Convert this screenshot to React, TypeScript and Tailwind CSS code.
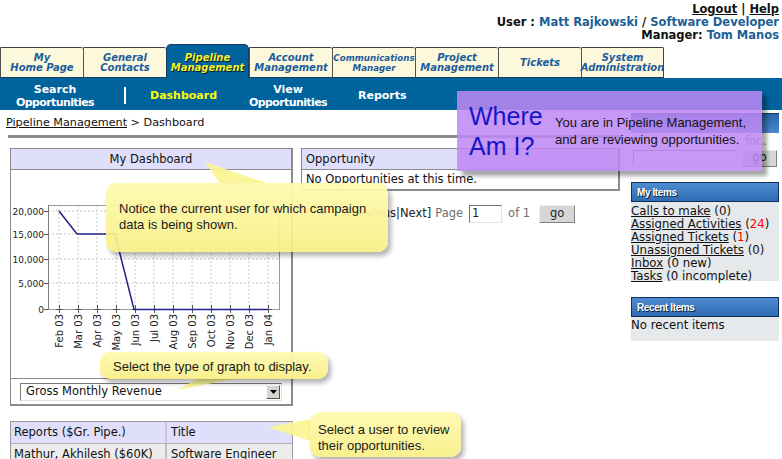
import React from "react";

const TABS: string[][] = [
  ["My", "Home Page"],
  ["General", "Contacts"],
  ["Pipeline", "Management"],
  ["Account", "Management"],
  ["Communications", "Manager"],
  ["Project", "Management"],
  ["Tickets"],
  ["System", "Administration"],
];

const MONTHS = ["Feb", "Mar", "Apr", "May", "Jun", "Jul", "Aug", "Sep", "Oct", "Nov", "Dec", "Jan"];
const Y_TICKS: [string, number][] = [
  ["20,000", 41],
  ["15,000", 64],
  ["10,000", 89],
  ["5,000", 113],
  ["0", 139],
];

function RevenueChart() {
  const xs = MONTHS.map((_, i) => 48 + i * 19);
  return (
    <svg width="281" height="208" className="block">
      {/* grid */}
      {Y_TICKS.slice(0, 4).map(([, y]) => (
        <line key={y} x1="37" x2="268" y1={y} y2={y} stroke="#c8c8c8" strokeDasharray="2 2" />
      ))}
      {xs.map((x) => (
        <line key={x} x1={x} x2={x} y1="35" y2="139" stroke="#c8c8c8" strokeDasharray="2 2" />
      ))}
      <rect x="37.5" y="35.5" width="231" height="104" fill="none" stroke="#9a9a9a" />
      <line x1="37.5" x2="37.5" y1="35" y2="140" stroke="#7a7a7a" />
      {/* y axis */}
      {Y_TICKS.map(([label, y]) => (
        <g key={label}>
          <line x1="33" x2="37" y1={y + 0.5} y2={y + 0.5} stroke="#555" />
          <text x="33" y={y + 3.5} textAnchor="end" fontSize="9" fill="#222" fontFamily="DejaVu Sans, sans-serif">
            {label}
          </text>
        </g>
      ))}
      {/* x axis */}
      {xs.map((x, i) => (
        <g key={i}>
          <line x1={x + 0.5} x2={x + 0.5} y1="135" y2="143" stroke="#555" />
          <line x1={x - 3} x2={x + 4} y1="139.5" y2="139.5" stroke="#555" />
          <text
            x={x + 4}
            y="144"
            textAnchor="end"
            fontSize="10"
            fill="#222"
            fontFamily="DejaVu Sans, sans-serif"
            transform={`rotate(-90 ${x + 4} 144)`}
          >
            {MONTHS[i]} {i === 11 ? "04" : "03"}
          </text>
        </g>
      ))}
      <polyline
        points="48,41 66,64 104,64 123,139.5 257,139.5"
        fill="none"
        stroke="#22228c"
        strokeWidth="1.5"
      />
    </svg>
  );
}

function Tab({ lines, index }: { lines: string[]; index: number }) {
  const active = index === 2;
  const small = index === 4;
  if (active) {
    return (
      <div className="w-[83px] h-[34px] shrink-0 rounded-t-[5px] bg-[#00639c] border border-b-0 border-[#17395c] flex flex-col items-center justify-center pt-[2px] text-[10px] font-bold italic leading-[10px] text-[#f2f22e] [text-shadow:1px_1px_0_#0a1a2a]">
        {lines.map((l) => (
          <span key={l}>{l}</span>
        ))}
      </div>
    );
  }
  return (
    <div
      className={`w-[83px] h-[31px] shrink-0 bg-[#fcf8dc] border-t border-l border-b border-t-[#404040] border-l-[#505050] border-b-[#1d3e5e] rounded-tr-[2px] flex flex-col items-center justify-center font-bold italic leading-[10px] text-[#1c5c9c] ${
        small ? "text-[8.7px]" : "text-[10px]"
      } ${index === 7 ? "border-r border-r-[#404040]" : ""}`}
    >
      {lines.map((l) => (
        <span key={l}>{l}</span>
      ))}
    </div>
  );
}

function Callout({
  className,
  tail,
  children,
}: {
  className: string;
  tail: string;
  children: React.ReactNode;
}) {
  return (
    <>
      <svg className="absolute left-0 top-0 pointer-events-none" width="782" height="459" viewBox="0 0 782 459">
        <polygon points={tail} fill="#fbf594" fillOpacity="0.92" />
      </svg>
      <div
        className={`absolute rounded-[10px] bg-linear-to-b from-[#fefab0]/95 to-[#f8ef84]/92 shadow-[3px_4px_5px_rgba(0,0,0,0.3)] font-['Liberation_Sans',Arial,sans-serif] text-[13px] leading-[16px] text-[#1a1a1a] ${className}`}
      >
        {children}
      </div>
    </>
  );
}

export default function App() {
  return (
    <div className="relative w-[782px] h-[459px] overflow-hidden bg-white font-['DejaVu_Sans',Verdana,sans-serif] text-[11.5px] text-[#111]">
      {/* user header */}
      <div className="h-[44px] flex flex-col items-end pr-[3px] pt-[3px] font-bold leading-[13px]">
        <div>
          <span className="underline">Logout</span> | <span className="underline">Help</span>
        </div>
        <div>
          User : <span className="text-[#1d5f96]">Matt Rajkowski</span> /{" "}
          <span className="text-[#1d5f96]">Software Developer</span>
        </div>
        <div>
          Manager: <span className="text-[#1d5f96]">Tom Manos</span>
        </div>
      </div>

      {/* module tabs */}
      <div className="flex items-end h-[34px]">
        {TABS.map((t, i) => (
          <Tab key={i} lines={t} index={i} />
        ))}
      </div>

      {/* sub navigation */}
      <div className="h-[32px] bg-[#00639c] flex items-center pt-[3px] text-white font-bold text-[11px] leading-[13px]">
        <div className="w-[110px] flex flex-col items-center">
          <span>Search</span>
          <span className="tracking-[-0.6px]">Opportunities</span>
        </div>
        <div className="ml-[14px] w-[2px] h-[17px] bg-white" />
        <div className="ml-[24px] w-[68px] text-[#ffff00]">Dashboard</div>
        <div className="ml-[20px] w-[100px] flex flex-col items-center">
          <span>View</span>
          <span className="tracking-[-0.6px]">Opportunities</span>
        </div>
        <div className="ml-[20px]">Reports</div>
      </div>

      <div className="flex">
        {/* main column */}
        <div className="w-[625px]">
          <div className="h-[25px] flex items-center pt-[2px] pl-[6px] text-[11.2px]">
            <span className="underline">Pipeline Management</span>&nbsp;&gt; Dashboard
          </div>
          <div className="ml-[8px] w-[614px] h-[3px] bg-[#8c8c8c]" />

          <div className="flex pt-[10px]">
            {/* left column */}
            <div className="ml-[10px] w-[283px]">
              <div className="border border-[#8a8a8a] border-r-2 border-b-2">
                <div className="h-[21px] bg-[#dfdffb] border-b border-[#8a8a8a] flex items-center justify-center pt-[1px]">
                  My Dashboard
                </div>
                <div className="h-[209px] border-b border-[#8a8a8a]">
                  <RevenueChart />
                </div>
                <div className="h-[25px] flex items-start pt-[4px] px-[9px]">
                  <div className="w-full h-[18px] bg-white border border-t-[#7a7a7a] border-l-[#7a7a7a] border-r-[#e0e0e0] border-b-[#e0e0e0] flex items-center justify-between pl-[5px] pr-[1px]">
                    <span>Gross Monthly Revenue</span>
                    <div className="w-[14px] h-[14px] bg-[#d8d5cf] border border-t-white border-l-white border-r-[#555] border-b-[#555] flex items-center justify-center">
                      <svg width="7" height="4" viewBox="0 0 7 4">
                        <polygon points="0,0 7,0 3.5,4" fill="#000" />
                      </svg>
                    </div>
                  </div>
                </div>
              </div>

              <div className="mt-[15px] border border-[#9a9a9a] bg-white">
                <div className="flex h-[21px] bg-[#dfdffb]">
                  <div className="w-[156px] border-r-2 border-r-[#c8c8d8] flex items-center pl-[3px] pt-[1px]">
                    Reports ($Gr. Pipe.)
                  </div>
                  <div className="flex-1 flex items-center pl-[4px] pt-[1px]">Title</div>
                </div>
                <div className="flex h-[21px] bg-[#ececec] border-t border-[#b0b0b0]">
                  <div className="w-[156px] border-r-2 border-r-[#c0c0c0] flex items-center pl-[3px] pt-[1px]">
                    <span className="underline">Mathur, Akhilesh</span>&nbsp;($60K)
                  </div>
                  <div className="flex-1 flex items-center pl-[4px] pt-[1px]">Software Engineer</div>
                </div>
              </div>
            </div>

            {/* middle column */}
            <div className="ml-[8px] w-[319px]">
              <div className="border border-[#8a8a8a] border-r-2 border-b-2">
                <div className="h-[21px] bg-[#dfdffb] border-b border-[#8a8a8a] flex items-center pl-[4px] pt-[1px]">
                  Opportunity
                </div>
                <div className="h-[19px] bg-white flex items-center pl-[4px] pt-[1px]">No Opportunities at this time.</div>
              </div>
              <div className="mt-[14px] flex items-center pl-[42px] h-[18px] text-[#222]">
                <span>[Previous|Next]</span>
                <span className="ml-[4px] text-[#707070]">Page</span>
                <div className="ml-[6px] w-[33px] h-[18px] bg-white border border-t-[#707070] border-l-[#707070] border-r-[#e4e4e4] border-b-[#e4e4e4] flex items-center pl-[2px]">
                  1
                </div>
                <span className="ml-[6px] text-[#707070]">of 1</span>
                <div className="ml-[9px] w-[36px] h-[18px] bg-[#d6d6d6] border border-t-[#f0f0f0] border-l-[#f0f0f0] border-r-[#808080] border-b-[#808080] flex items-center justify-center">
                  go
                </div>
              </div>
            </div>
          </div>
        </div>

        {/* right sidebar */}
        <div className="ml-[6px] w-[148px] pt-[3px]">
          <div className="h-[20px] bg-linear-to-b from-[#2a66ad] to-[#4a88cf] border-t border-[#163a66]" />
          <div className="h-[17px] text-right pr-[12px] leading-[17px] text-[#666]">for..</div>
          <div className="flex items-center h-[16px] pl-[2px]">
            <div className="w-[105px] h-[16px] bg-white border border-t-[#707070] border-l-[#707070] border-r-[#e4e4e4] border-b-[#e4e4e4]" />
            <div className="ml-[4px] w-[35px] h-[17px] bg-[#d6d6d6] border border-t-[#f0f0f0] border-l-[#f0f0f0] border-r-[#808080] border-b-[#808080] flex items-center justify-center">
              go
            </div>
          </div>

          <div className="mt-[16px] h-[20px] bg-linear-to-b from-[#4f8bd0] to-[#2f6cb5] border border-[#10305a] flex items-center pl-[5px] font-['Liberation_Sans',Arial,sans-serif] font-bold text-[10px] tracking-[-0.4px] text-white [text-shadow:1px_1px_0_#0a1e3a]">
            My Items
          </div>
          <div className="h-[79px] bg-[#e6e9ec] pt-[3px] text-[11.75px] leading-[13px]">
            <div>
              <span className="underline">Calls to make</span> (0)
            </div>
            <div>
              <span className="underline">Assigned Activities</span> (<span className="text-[#ff0000]">24</span>)
            </div>
            <div>
              <span className="underline">Assigned Tickets</span> (<span className="text-[#ff0000]">1</span>)
            </div>
            <div>
              <span className="underline">Unassigned Tickets</span> (0)
            </div>
            <div>
              <span className="underline">Inbox</span> (0 new)
            </div>
            <div>
              <span className="underline">Tasks</span> (0 incomplete)
            </div>
          </div>

          <div className="mt-[16px] h-[20px] bg-linear-to-b from-[#4f8bd0] to-[#2f6cb5] border border-[#10305a] flex items-center pl-[5px] font-['Liberation_Sans',Arial,sans-serif] font-bold text-[10px] tracking-[-0.4px] text-white [text-shadow:1px_1px_0_#0a1e3a]">
            Recent Items
          </div>
          <div className="h-[24px] bg-[#e6e9ec] pt-[2px] text-[11.75px] leading-[13px]">No recent items</div>
        </div>
      </div>

      {/* "Where Am I?" overlay */}
      <div className="absolute left-[457px] top-[91px] w-[305px] h-[80px] bg-[rgba(190,135,243,0.86)] shadow-[5px_5px_4px_rgba(0,0,0,0.35)] flex items-center pl-[12px] font-['Liberation_Sans',Arial,sans-serif]">
        <div className="w-[86px] text-[25px] leading-[30px] text-[#1616c8]">
          Where
          <br />
          Am I?
        </div>
        <div className="text-[13px] leading-[17px] text-[#141414]">
          You are in Pipeline Management,
          <br />
          and are reviewing opportunities.
        </div>
      </div>

      {/* help callouts */}
      <Callout className="left-[106px] top-[183px] w-[282px] h-[69px] pt-[18px] pl-[13px]" tail="205,162 220,183.5 268,183.5">
        Notice the current user for which campaign
        <br />
        data is being shown.
      </Callout>
      <Callout className="left-[100px] top-[352px] w-[228px] h-[27px] pt-[7px] pl-[13px]" tail="177,390 198,378.5 236,378.5">
        Select the type of graph to display.
      </Callout>
      <Callout className="left-[310px] top-[412px] w-[151px] h-[45px] pt-[10px] pl-[8px]" tail="268,427 310.5,419 310.5,441">
        Select a user to review
        <br />
        their opportunities.
      </Callout>
    </div>
  );
}
